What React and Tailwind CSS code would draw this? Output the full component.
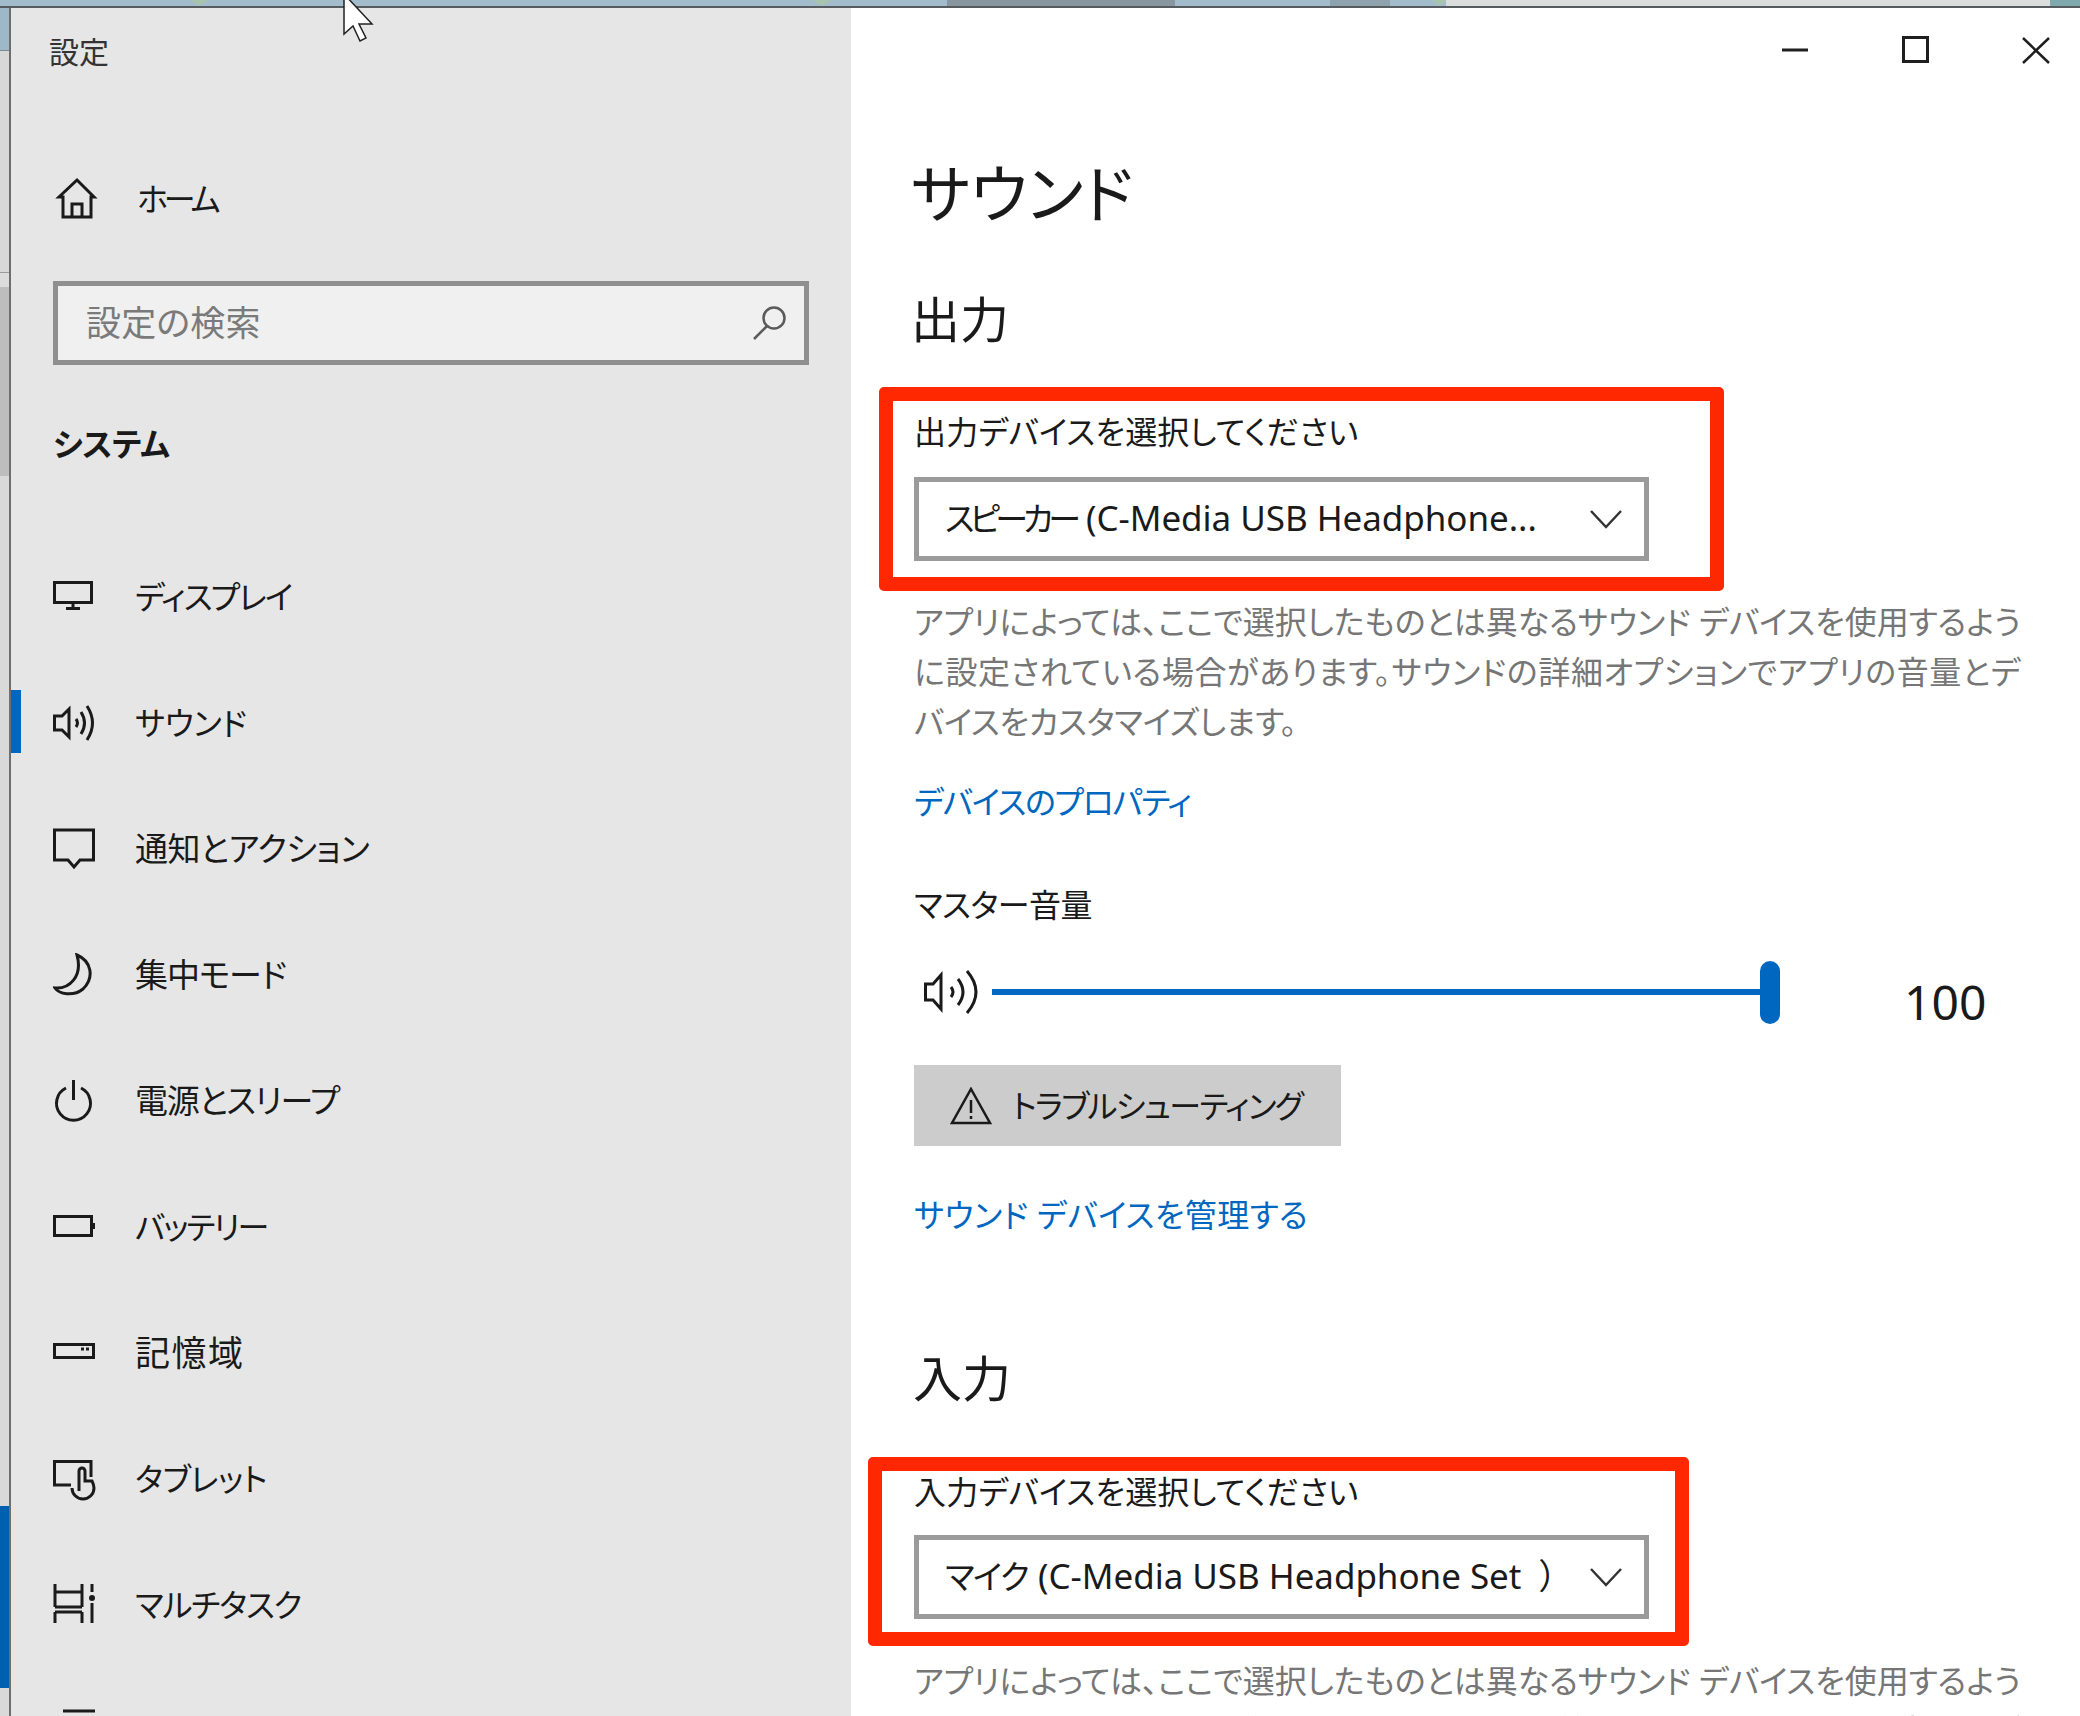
const sans = "font-['Noto_Sans','Noto_Sans_CJK_JP',sans-serif] [font-feature-settings:'palt']"

const line = {
  fill: 'none',
  stroke: '#1a1a1a',
  strokeWidth: 3,
}

function Icon({ children, className = '' }) {
  return (
    <svg width="46" height="44" viewBox="0 0 46 44" className={`shrink-0 ${className}`} {...line}>
      {children}
    </svg>
  )
}

const HomeIcon = () => (
  <Icon>
    <path d="M6 40V20H2L20 3l17 17h-3v20H6z" transform="translate(4 0)" />
    <path d="M19 40V27h10v13" />
  </Icon>
)
const DisplayIcon = () => (
  <Icon>
    <rect x="1.5" y="7.5" width="37" height="20" />
    <path d="M20 28v5M13 33.5h14" />
  </Icon>
)
const SoundIcon = () => (
  <Icon>
    <path d="M1.5 15H9l7-7v28l-7-7H1.5z" />
    <path d="M23 18q3 4 0 8M28 11q7 11 0 22M34 5q11 17 0 34" />
  </Icon>
)
const NotifyIcon = () => (
  <Icon>
    <path d="M1.5 3h39v30H27l-6 7-6-7H1.5z" />
  </Icon>
)
const MoonIcon = () => (
  <Icon>
    <path d="M24 2c14 6 18 22 6 34C20 44 6 41 2 35c14 1 28-11 22-33z" />
  </Icon>
)
const PowerIcon = () => (
  <Icon>
    <path d="M13 9a17 17 0 1 0 15 0M20.500 1v20" />
  </Icon>
)
const BatteryIcon = () => (
  <Icon>
    <rect x="1.500" y="11.500" width="37" height="19" />
    <path d="M40.500 18v6" />
  </Icon>
)
const StorageIcon = () => (
  <Icon>
    <rect x="1.500" y="13.500" width="39" height="13" />
    <path d="M28 18h3M33 18h3" />
  </Icon>
)
const TabletIcon = () => (
  <Icon>
    <path d="M18 28H1.500V4.500H38V20" />
    <path d="M19 31a11 11 0 1 0 22 0c0-3-1-5-2-7h-7v-10a3 3 0 0 0-6 0v20" />
  </Icon>
)
const MultitaskIcon = () => (
  <Icon>
    <path d="M2 1v11M29 1v11M2 9h27M2 24h27M2 29h27M2 9v15M29 9v15M2 29v11M29 29v11M39 1v8M39 20v20" />
    <circle cx="39" cy="15" r="3" fill="#1a1a1a" stroke="none" />
  </Icon>
)
const ProjectIcon = () => (
  <Icon>
    <path d="M10 2h32" />
  </Icon>
)

const navItems = [
  { label: 'ディスプレイ', icon: DisplayIcon, text: 'text-[32px] tracking-[-1.8px]' },
  { label: 'サウンド', icon: SoundIcon, active: true, text: 'text-[32px] tracking-[-0.3px]' },
  { label: '通知とアクション', icon: NotifyIcon, text: 'text-[33px] tracking-[-0.5px]' },
  { label: '集中モード', icon: MoonIcon, text: 'text-[33px] tracking-[-1px]' },
  { label: '電源とスリープ', icon: PowerIcon, text: 'text-[33px] tracking-[-1.2px]' },
  { label: 'バッテリー', icon: BatteryIcon, text: 'text-[32px] tracking-[-2px]' },
  { label: '記憶域', icon: StorageIcon, text: 'text-[35px] tracking-[1.5px]' },
  { label: 'タブレット', icon: TabletIcon, text: 'text-[32px] tracking-[-0.4px]' },
  { label: 'マルチタスク', icon: MultitaskIcon, text: 'text-[32px] tracking-[-1.2px]' },
  { label: 'このPCへのプロジェクション', icon: ProjectIcon, text: 'text-[32px]' },
]

function NavRow({ item }) {
  const IconComp = item.icon
  return (
    <div className="relative flex h-[126px] shrink-0 items-center pl-[42px]">
      {item.active && <div className="absolute left-0 top-[30px] h-[63px] w-[10px] bg-[#0067c0]" />}
      <div className="w-[82px]">
        <IconComp />
      </div>
      <span className={`leading-[44px] text-[#1a1a1a] ${item.text}`}>{item.label}</span>
    </div>
  )
}

function Sidebar() {
  return (
    <div className="flex h-full w-[840px] shrink-0 flex-col overflow-hidden bg-[#e6e6e6]">
      <div className="flex h-[88px] shrink-0 items-center pl-[38px] text-[30px] leading-[40px] text-[#333333]">設定</div>
      <div className="mt-[40px] flex h-[126px] shrink-0 items-center pl-[42px]">
        <div className="w-[84px]">
          <HomeIcon />
        </div>
        <span className="text-[32px] leading-[44px] tracking-[-4px] text-[#1a1a1a]">ホーム</span>
      </div>
      <div className="ml-[42px] mt-[19px] flex h-[84px] w-[756px] shrink-0 items-center justify-between border-[5px] border-[#8f8f8f] bg-[#f0f0f0] pl-[28px] pr-[16px]">
        <span className="text-[35px] leading-[44px] tracking-[0.2px] text-[#7a7a7a]">設定の検索</span>
        <svg width="36" height="36" viewBox="0 0 36 36" fill="none" stroke="#5a5a5a" strokeWidth="2.500">
          <circle cx="22" cy="13" r="10.500" />
          <path d="M15 21L2 34" />
        </svg>
      </div>
      <div className="ml-[42px] mt-[16px] flex h-[126px] shrink-0 items-center text-[32px] font-bold leading-[44px] tracking-[-0.3px] text-[#1a1a1a]">システム</div>
      <div className="mt-[27px] flex flex-col">
        {navItems.map((item) => (
          <NavRow key={item.label} item={item} />
        ))}
      </div>
    </div>
  )
}

function WindowButtons() {
  return (
    <div className="flex h-[84px] shrink-0 items-center justify-end pr-[14px]">
      <svg width="366" height="30" viewBox="0 0 366 30" fill="none" stroke="#1f1f1f" strokeWidth="3">
        <path d="M82 15h26" />
        <rect x="203.500" y="2.500" width="24" height="24" />
        <path d="M323 3l26 25M349 3l-26 25" strokeWidth="2.500" />
      </svg>
    </div>
  )
}

function DeviceSelect({ kana, kanaClass, latin }) {
  return (
    <div className="flex h-[84px] w-[735px] shrink-0 items-center justify-between border-[5px] border-[#9b9b9b] bg-white pl-[26px] pr-[22px]">
      <span className="whitespace-pre pt-[5px] leading-[44px] text-[#1a1a1a]">
        <span className={`text-[33px] ${kanaClass}`}>{kana}</span>
        <span className="ml-[10px] text-[35px] tracking-[-0.05px]">{latin}</span>
      </span>
      <svg width="32" height="20" viewBox="0 0 32 20" fill="none" stroke="#333333" strokeWidth="2.500">
        <path d="M1 2l15 16L31 2" />
      </svg>
    </div>
  )
}

function Blurb({ lines }) {
  return (
    <div className="text-[32px] leading-[50px] text-[#767676]">
      {lines.map((l) => (
        <div key={l.text} className={`whitespace-nowrap ${l.track}`}>{l.text}</div>
      ))}
    </div>
  )
}

function Main() {
  return (
    <div className="relative flex h-full flex-1 flex-col overflow-hidden bg-white pl-[63px]">
      <div className="-ml-[63px]">
        <WindowButtons />
      </div>
      <h1 className="-ml-[3px] mt-[61px] text-[63px] font-normal leading-[80px] text-[#1a1a1a]">サウンド</h1>
      <h2 className="-ml-[3px] mt-[56px] text-[49px] font-normal leading-[60px] text-[#1a1a1a]">出力</h2>

      <div className="mt-[61px] text-[32px] leading-[44px] tracking-[0.2px] text-[#1a1a1a]">出力デバイスを選択してください</div>
      <div className="mt-[23px]">
        <DeviceSelect kana="スピーカー" kanaClass="tracking-[-5px]" latin="(C-Media USB Headphone..." />
      </div>

      <div className="mt-[36px]">
        <Blurb
          lines={[
            { text: 'アプリによっては、ここで選択したものとは異なるサウンド デバイスを使用するよう', track: '' },
            { text: 'に設定されている場合があります。サウンドの詳細オプションでアプリの音量とデ', track: 'tracking-[0.65px]' },
            { text: 'バイスをカスタマイズします。', track: 'tracking-[-0.25px]' },
          ]}
        />
      </div>

      <div className="mt-[33px] text-[32px] leading-[44px] tracking-[-1.3px] text-[#0067c0]">デバイスのプロパティ</div>
      <div className="mt-[59px] text-[32px] leading-[44px] tracking-[-0.5px] text-[#1a1a1a]">マスター音量</div>

      <div className="mt-[25px] flex h-[90px] items-center">
        <svg width="58" height="46" viewBox="0 0 58 46" className="ml-[10px] shrink-0" fill="none" stroke="#1a1a1a" strokeWidth="3">
          <path d="M1.500 15H9l8-9v34l-8-9H1.500z" />
          <path d="M27 18q4 5 0 10M34 10q10 13 0 26M43 2q18 21 0 42" />
        </svg>
        <div className="relative ml-[10px] flex h-[63px] w-[788px] shrink-0 items-center">
          <div className="h-[6px] w-full bg-[#0067c0]" />
          <div className="absolute right-0 top-0 h-[63px] w-[20px] rounded-full bg-[#0067c0]" />
        </div>
        <div className="ml-[124px] mt-[20px] font-['Noto_Sans',sans-serif] text-[48px] leading-[60px] text-[#1a1a1a]">100</div>
      </div>

      <button className="mt-[33px] flex h-[81px] w-[427px] shrink-0 items-center bg-[#cccccc] pl-[36px]">
        <svg width="42" height="38" viewBox="0 0 42 38" fill="none" stroke="#1a1a1a" strokeWidth="2.500">
          <path d="M21 2l19 34H2z" />
          <path d="M21 13v13M21 29v3" />
        </svg>
        <span className="ml-[20px] text-[32px] leading-[44px] tracking-[-1.6px] text-[#1a1a1a]">トラブルシューティング</span>
      </button>

      <div className="mt-[47px] text-[32px] leading-[44px] tracking-[0.4px] text-[#0067c0]">サウンド デバイスを管理する</div>

      <h2 className="-ml-[1px] mt-[111px] text-[49px] font-normal leading-[60px] text-[#1a1a1a]">入力</h2>

      <div className="mt-[62px] text-[32px] leading-[44px] tracking-[0.2px] text-[#1a1a1a]">入力デバイスを選択してください</div>
      <div className="mt-[21px]">
        <DeviceSelect kana="マイク" kanaClass="tracking-[-1.5px]" latin={'(C-Media USB Headphone Set\u00a0\u00a0）'} />
      </div>

      <div className="mt-[37px]">
        <Blurb
          lines={[
            { text: 'アプリによっては、ここで選択したものとは異なるサウンド デバイスを使用するよう', track: '' },
            { text: 'に設定されている場合があります。サウンドの詳細オプションでアプリの音量とデ', track: 'tracking-[0.65px]' },
          ]}
        />
      </div>

      {/* red annotation boxes */}
      <div className="absolute left-[28px] top-[379px] h-[204px] w-[845px] rounded-[5px] border-[14px] border-[#ff2800]" />
      <div className="absolute left-[17px] top-[1449px] h-[189px] w-[821px] rounded-[5px] border-[14px] border-[#ff2800]" />
    </div>
  )
}

function DesktopEdge() {
  return (
    <div className="flex h-full w-[11px] shrink-0 flex-col border-r-[2px] border-[#6e6e6e] bg-[#d9d9d9]">
      <div className="h-[43px] shrink-0 border-b border-[#7f8a90] bg-[#9db8c8]" />
      <div className="h-[222px] shrink-0 border-b border-[#9a9a9a] bg-[#d8d8d8]" />
      <div className="h-[14px] shrink-0 bg-[#dcdcdc]" />
      <div className="h-[189px] shrink-0 bg-[#bdbdbd]" />
      <div className="mt-[1030px] h-[182px] shrink-0 bg-[#0060b0]" />
    </div>
  )
}

export default function App() {
  return (
    <div className={`relative flex h-[1716px] w-[2080px] flex-col overflow-hidden bg-[#d9d9d9] ${sans}`}>
      <div className="h-[8px] shrink-0 border-b-[2px] border-[#555b5e] bg-[#a3bccc]">
        {/* wallpaper peeking out above the window */}
        <svg width="2080" height="6" viewBox="0 0 2080 6" className="block">
          <rect x="947" width="228" height="6" fill="#87969f" />
          <rect x="1330" width="60" height="6" fill="#8fa3ae" />
          <rect x="1446" width="604" height="6" fill="#dcdedd" />
          <rect x="2050" width="30" height="6" fill="#7fa9ad" />
          <path d="M190 0h18l-9 6zM813 0h18l-9 6zM1432 0h14v1l-7 5z" fill="#a9c4ae" />
        </svg>
      </div>
      <div className="flex min-h-0 flex-1">
        <DesktopEdge />
        <Sidebar />
        <Main />
      </div>
      {/* mouse pointer */}
      <svg width="36" height="44" viewBox="0 0 36 44" className="absolute left-[342px] top-0" fill="#ffffff" stroke="#222222" strokeWidth="1.500">
        <path d="M2 -6V34l9-8 7 15 6-3-7-14h13z" />
      </svg>
    </div>
  )
}
